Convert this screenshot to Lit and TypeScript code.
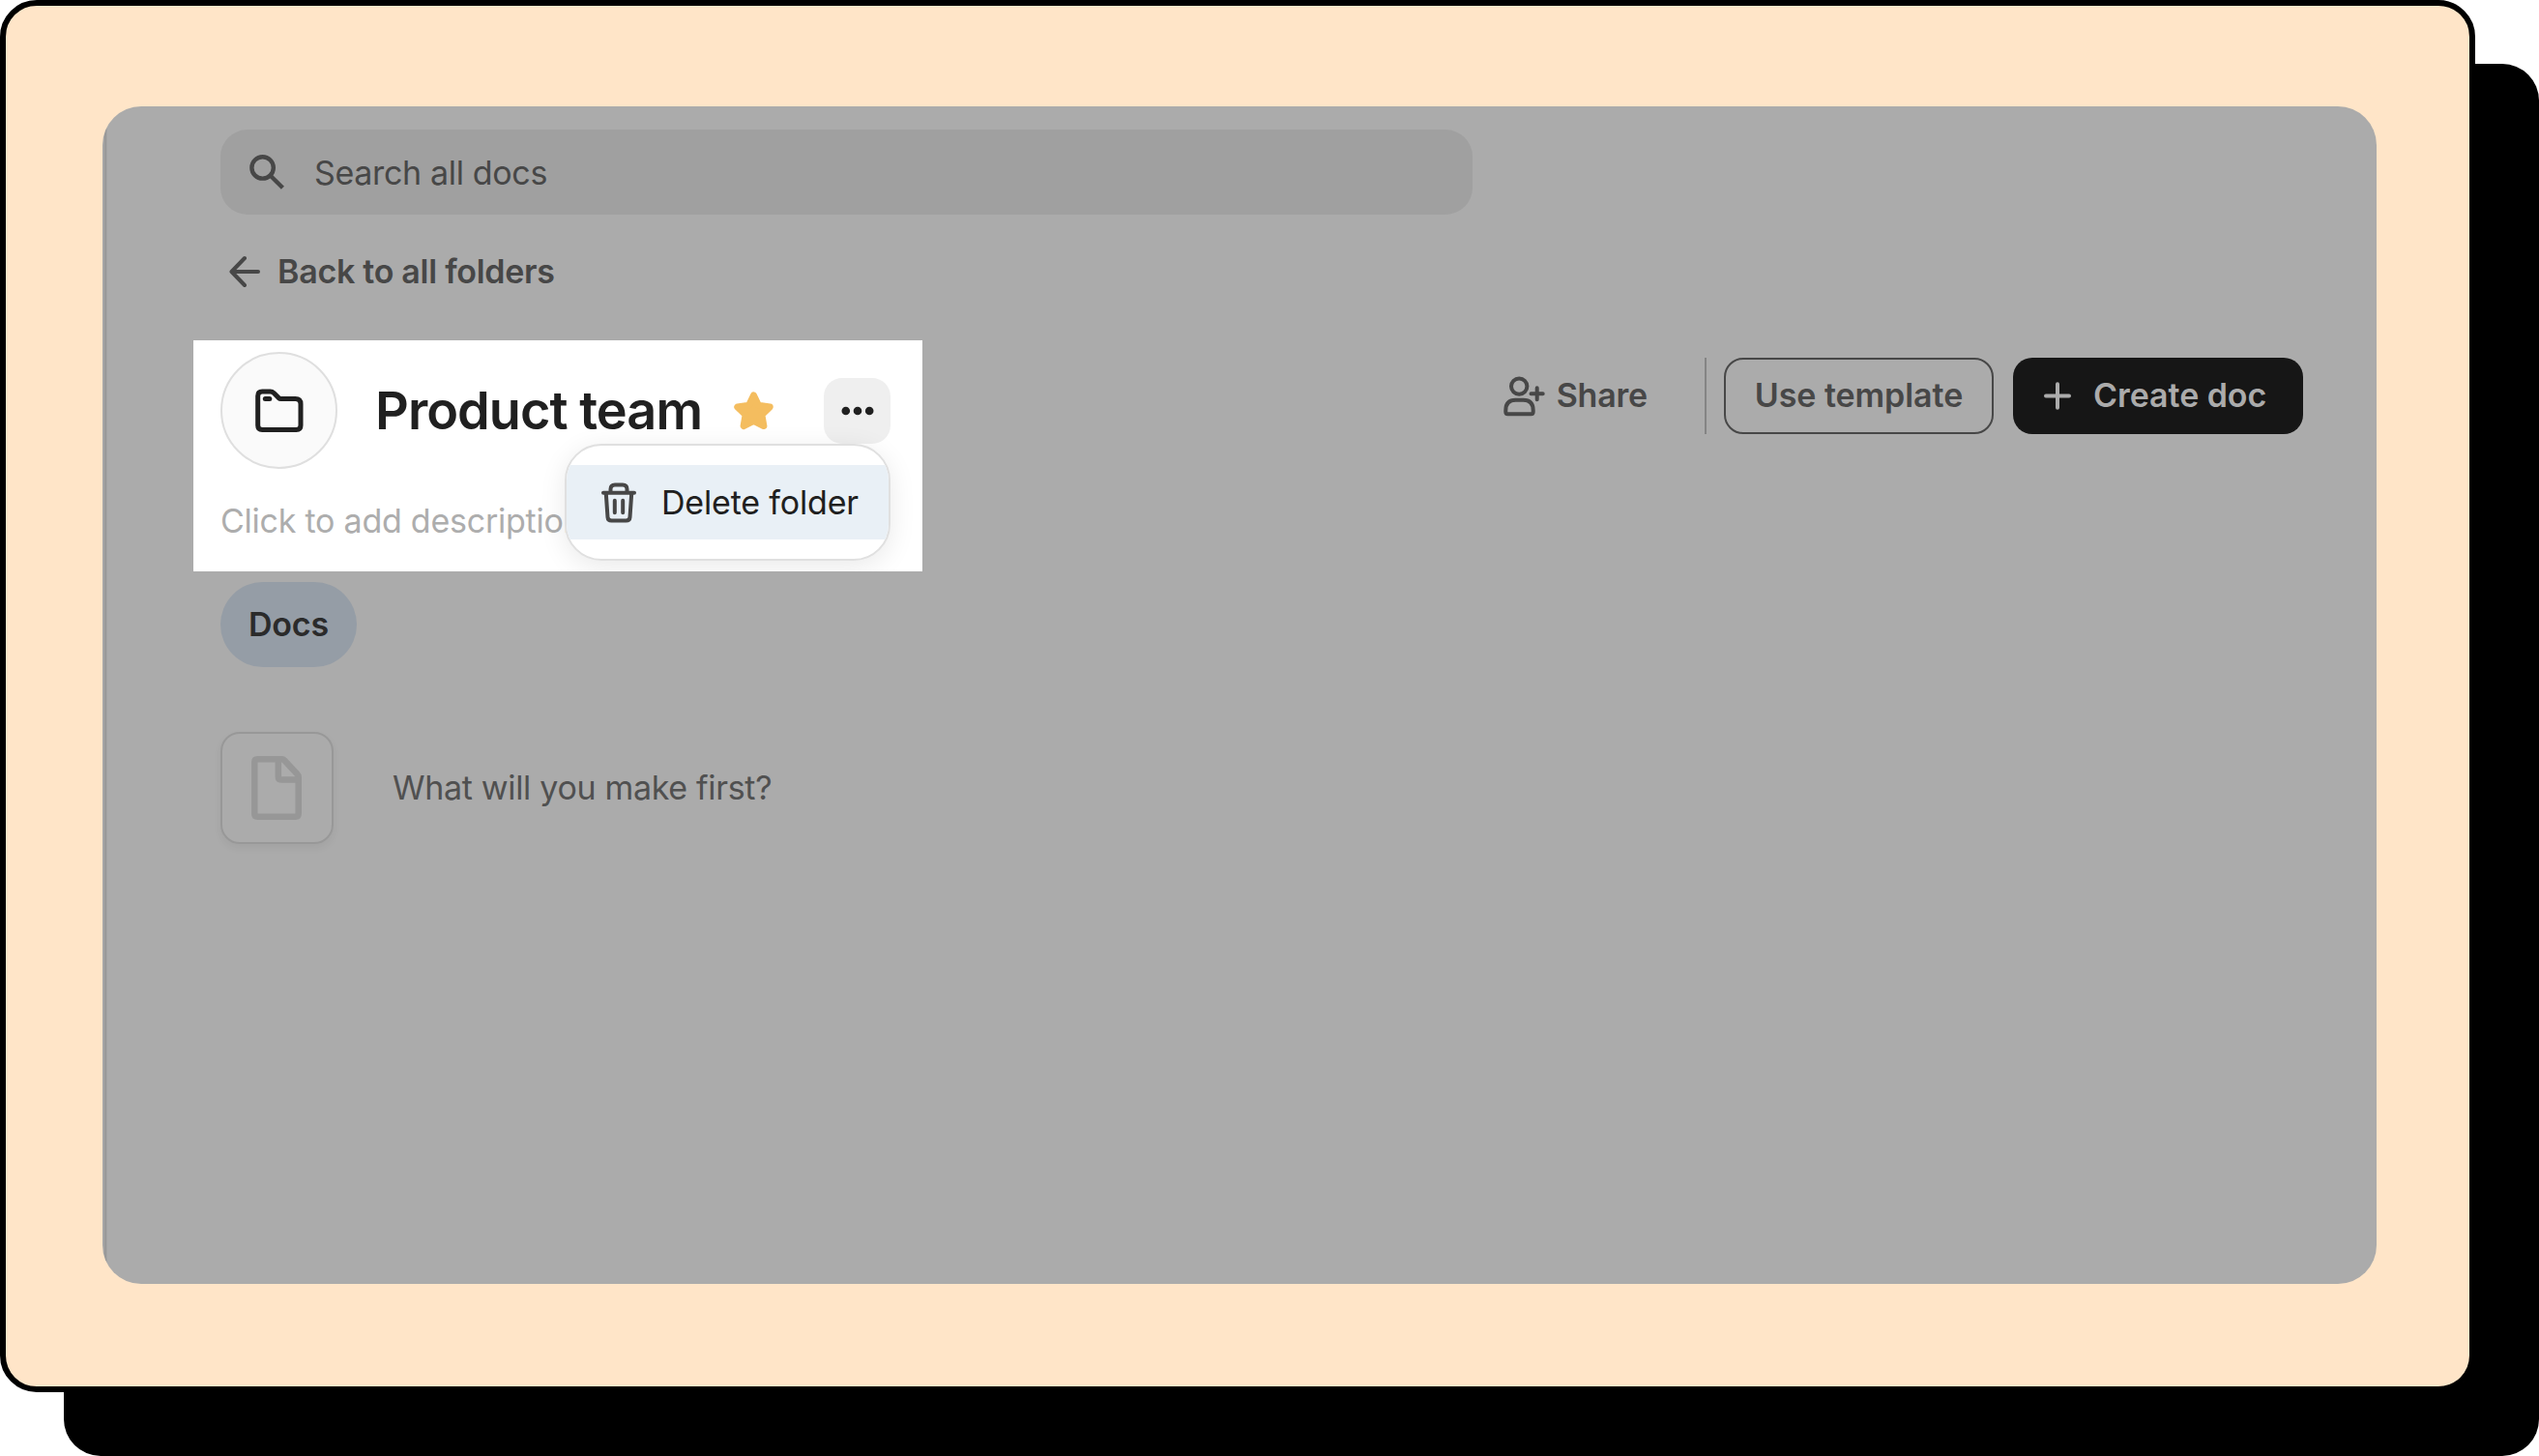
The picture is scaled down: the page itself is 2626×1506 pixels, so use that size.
import { LitElement, html, css, svg } from "lit";
import { customElement } from "lit/decorators.js";

const icons = {
  search: svg`<svg class="i-search" viewBox="0 0 36 36" fill="none" stroke="currentColor" stroke-width="4.4"><circle cx="13.6" cy="13.4" r="11.2"/><path d="M21.5 21.5 34.4 34.2"/></svg>`,
  back: svg`<svg class="i-back" viewBox="0 0 34 34" fill="none" stroke="currentColor" stroke-width="4" stroke-linecap="round" stroke-linejoin="round"><path d="M31 17H4M17 3 3.5 17 17 31"/></svg>`,
  folder: svg`<svg class="i-folder" viewBox="0 0 50 46" fill="none" stroke="currentColor" stroke-width="5" stroke-linecap="round" stroke-linejoin="round"><path d="M2.7 7.5Q2.7 3 7.2 3H15.5Q17.6 3 19.2 4.6L24.3 9.6Q25.2 10.5 26.5 10.5H41.5Q47 10.5 47 16V38Q47 42.5 42.5 42.5H7.2Q2.7 42.5 2.7 38Z"/><path d="M10.3 10.5H14.8"/></svg>`,
  star: svg`<svg class="i-star" viewBox="0 0 41 40" fill="currentColor" stroke="currentColor" stroke-width="7" stroke-linejoin="round"><path d="M20.5 3.9 25.3 14.1 37.2 15.9 28.9 24.1 30.9 35.5 20.5 30.4 10.1 35.5 12.1 24.1 3.8 15.9 15.7 14.1Z"/></svg>`,
  dots: svg`<svg class="i-dots" viewBox="0 0 34 10" fill="currentColor"><circle cx="4.8" cy="5" r="4.3"/><circle cx="17" cy="5" r="4.3"/><circle cx="29.2" cy="5" r="4.3"/></svg>`,
  trash: svg`<svg class="i-trash" viewBox="0 0 36 42" fill="none" stroke="currentColor" stroke-width="4" stroke-linecap="round" stroke-linejoin="round"><path d="M2 10.7H34M9.5 10V7Q9.5 2.4 14 2.4H22Q26.5 2.4 26.5 7V10M4.8 11.5 6.5 36Q6.8 39.6 10.5 39.6H25.5Q29.2 39.6 29.5 36L31.2 11.5"/><path d="M13.8 18.8V31.2M22.2 18.8V31.2"/></svg>`,
  share: svg`<svg class="i-share" viewBox="0 0 43 42" fill="none" stroke="currentColor" stroke-width="4" stroke-linecap="round" stroke-linejoin="round"><circle cx="16.2" cy="10.6" r="8.2"/><path d="M2.3 35.5Q2.3 24.8 12.5 24.8H20.5Q30.7 24.8 30.7 35.5V37Q30.7 39.2 28.5 39.2H4.5Q2.3 39.2 2.3 37ZM34.7 12.2V24.2M28.5 18.3H40.7"/></svg>`,
  plus: svg`<svg class="i-plus" viewBox="0 0 28 29" fill="none" stroke="currentColor" stroke-width="4" stroke-linecap="round"><path d="M14 2.3V26.7M2 14.5H26"/></svg>`,
  doc: svg`<svg class="i-doc" viewBox="0 0 52 66" fill="none" stroke="currentColor" stroke-width="6.5" stroke-linejoin="round"><path d="M3.3 6.3Q3.3 3.3 6.3 3.3H31.5Q33 3.3 34 4.3L47.5 18.7Q48.7 19.9 48.7 21.5V59.7Q48.7 62.7 45.7 62.7H6.3Q3.3 62.7 3.3 59.7Z"/><path d="M27.8 4V21.4Q27.8 24.4 30.8 24.4H48"/></svg>`,
};

@customElement("app-root")
export class AppRoot extends LitElement {
  static styles = css`
    :host {
      display: block;
      width: 2626px;
      height: 1506px;
      background: #fff;
      font-family: Inter, "Liberation Sans", sans-serif;
      font-size: 34px;
      line-height: 40px;
      color: #474747;
      overflow: hidden;
    }
    * { box-sizing: border-box; }
    svg { display: block; flex: none; }
    .frame {
      width: 2560px;
      height: 1440px;
      border: 6px solid #000;
      border-radius: 38px;
      background: #ffe5c8;
      box-shadow: 66px 66px 0 #000;
      padding: 104px 96px 106px 100px;
    }
    .panel {
      height: 1218px;
      border-radius: 40px;
      background: linear-gradient(90deg, #a6a6a6 2px, #999 2px, #999 4px, #a3a3a3 4px, #a3a3a3 5px, #ababab 5px);
      padding: 24px 76px 0 94px;
      overflow: hidden;
    }
    .search {
      width: 1295px;
      height: 88px;
      margin-left: 28px;
      border-radius: 28px;
      background: #a0a0a0;
      display: flex;
      align-items: center;
      padding-left: 30px;
      gap: 31px;
      letter-spacing: -0.34px;
    }
    .search span { padding-top: 2px; }
    .i-search { width: 36px; height: 36px; }
    .back {
      display: flex;
      align-items: center;
      gap: 17px;
      height: 40px;
      margin: 39px 0 0 36px;
      font-weight: 600;
      letter-spacing: -0.28px;
    }
    .i-back { width: 34px; height: 34px; }
    .head {
      display: flex;
      justify-content: space-between;
      align-items: flex-start;
      margin-top: 51px;
    }
    .spot {
      width: 754px;
      height: 239px;
      background: #fff;
      padding: 12px 33px 0 28px;
      overflow: hidden;
    }
    .titlebar { display: flex; align-items: center; color: #202020; position: relative; }
    .avatar {
      width: 121px;
      height: 121px;
      border: 2px solid #dfdfdf;
      border-radius: 50%;
      background: #fafafa;
      display: grid;
      place-items: center;
    }
    .i-folder { width: 50px; height: 46px; }
    .title {
      font-size: 54px;
      line-height: 64px;
      font-weight: 600;
      margin-left: 39px;
      width: 371px;
      white-space: nowrap;
      letter-spacing: -0.95px;
    }
    .i-star { width: 41px; height: 40px; color: #f4bd5f; }
    .more {
      width: 69px;
      height: 68px;
      margin-left: auto;
      border-radius: 19px;
      background: #efefef;
      display: grid;
      place-items: center;
    }
    .i-dots { width: 34px; height: 10px; }
    .menu {
      position: absolute;
      right: 0;
      top: 95px;
      width: 337px;
      height: 121px;
      border: 2px solid #e0e0e0;
      border-radius: 38px;
      background: #fff;
      box-shadow: 0 6px 28px rgba(0, 0, 0, 0.09);
      overflow: hidden;
      padding: 20px 0;
    }
    .item {
      height: 77px;
      background: #e9f0f6;
      display: flex;
      align-items: center;
      gap: 26px;
      padding-left: 36px;
      white-space: nowrap;
      letter-spacing: -0.18px;
    }
    .i-trash { width: 36px; height: 42px; color: #474747; }
    .desc { margin-top: 34px; color: #adadad; letter-spacing: -0.24px; }
    .actions { display: flex; align-items: center; height: 79px; margin-top: 18px; font-weight: 600; }
    .actions span { padding-bottom: 1px; }
    .share { display: flex; align-items: center; gap: 12px; letter-spacing: -0.2px; }
    .i-share { width: 43px; height: 42px; }
    .rule { width: 2px; height: 79px; background: #848484; margin: 0 18px 0 59px; }
    .btn {
      height: 79px;
      border: 2px solid #474747;
      border-radius: 20px;
      width: 279px;
      display: flex;
      align-items: center;
      justify-content: center;
      white-space: nowrap;
      letter-spacing: -0.06px;
    }
    .dark {
      width: 300px;
      margin-left: 20px;
      border: 0;
      background: #161616;
      color: #ababab;
      justify-content: flex-start;
      padding-left: 32px;
      gap: 23px;
    }
    .i-plus { width: 28px; height: 29px; }
    .tab {
      display: grid;
      place-items: center;
      width: 141px;
      height: 88px;
      margin: 11px 0 0 28px;
      border-radius: 44px;
      background: #959da6;
      color: #2b2b2b;
      font-weight: 600;
      letter-spacing: -0.2px;
    }
    .empty {
      display: flex;
      align-items: center;
      gap: 61px;
      margin: 67px 0 0 28px;
      color: #505050;
      letter-spacing: -0.32px;
    }
    .thumb {
      width: 117px;
      height: 116px;
      border: 2px solid #989898;
      border-radius: 20px;
      display: flex;
      align-items: center;
      padding-left: 30px;
      color: #979797;
      box-shadow: 0 4px 8px rgba(0, 0, 0, 0.05);
    }
    .i-doc { width: 52px; height: 66px; }
  `;

  render() {
    return html`
      <div class="frame">
        <main class="panel">
          <div class="search">${icons.search}<span>Search all docs</span></div>
          <div class="back">${icons.back}<span>Back to all folders</span></div>
          <div class="head">
            <section class="spot">
              <div class="titlebar">
                <div class="avatar">${icons.folder}</div>
                <div class="title">Product team</div>
                ${icons.star}
                <div class="more">${icons.dots}</div>
                <div class="menu"><div class="item">${icons.trash}<span>Delete folder</span></div></div>
              </div>
              <div class="desc">Click to add description</div>
            </section>
            <div class="actions">
              <div class="share">${icons.share}<span>Share</span></div>
              <div class="rule"></div>
              <div class="btn"><span>Use template</span></div>
              <div class="btn dark">${icons.plus}<span>Create doc</span></div>
            </div>
          </div>
          <div class="tab">Docs</div>
          <div class="empty"><div class="thumb">${icons.doc}</div><span>What will you make first?</span></div>
        </main>
      </div>
    `;
  }
}
